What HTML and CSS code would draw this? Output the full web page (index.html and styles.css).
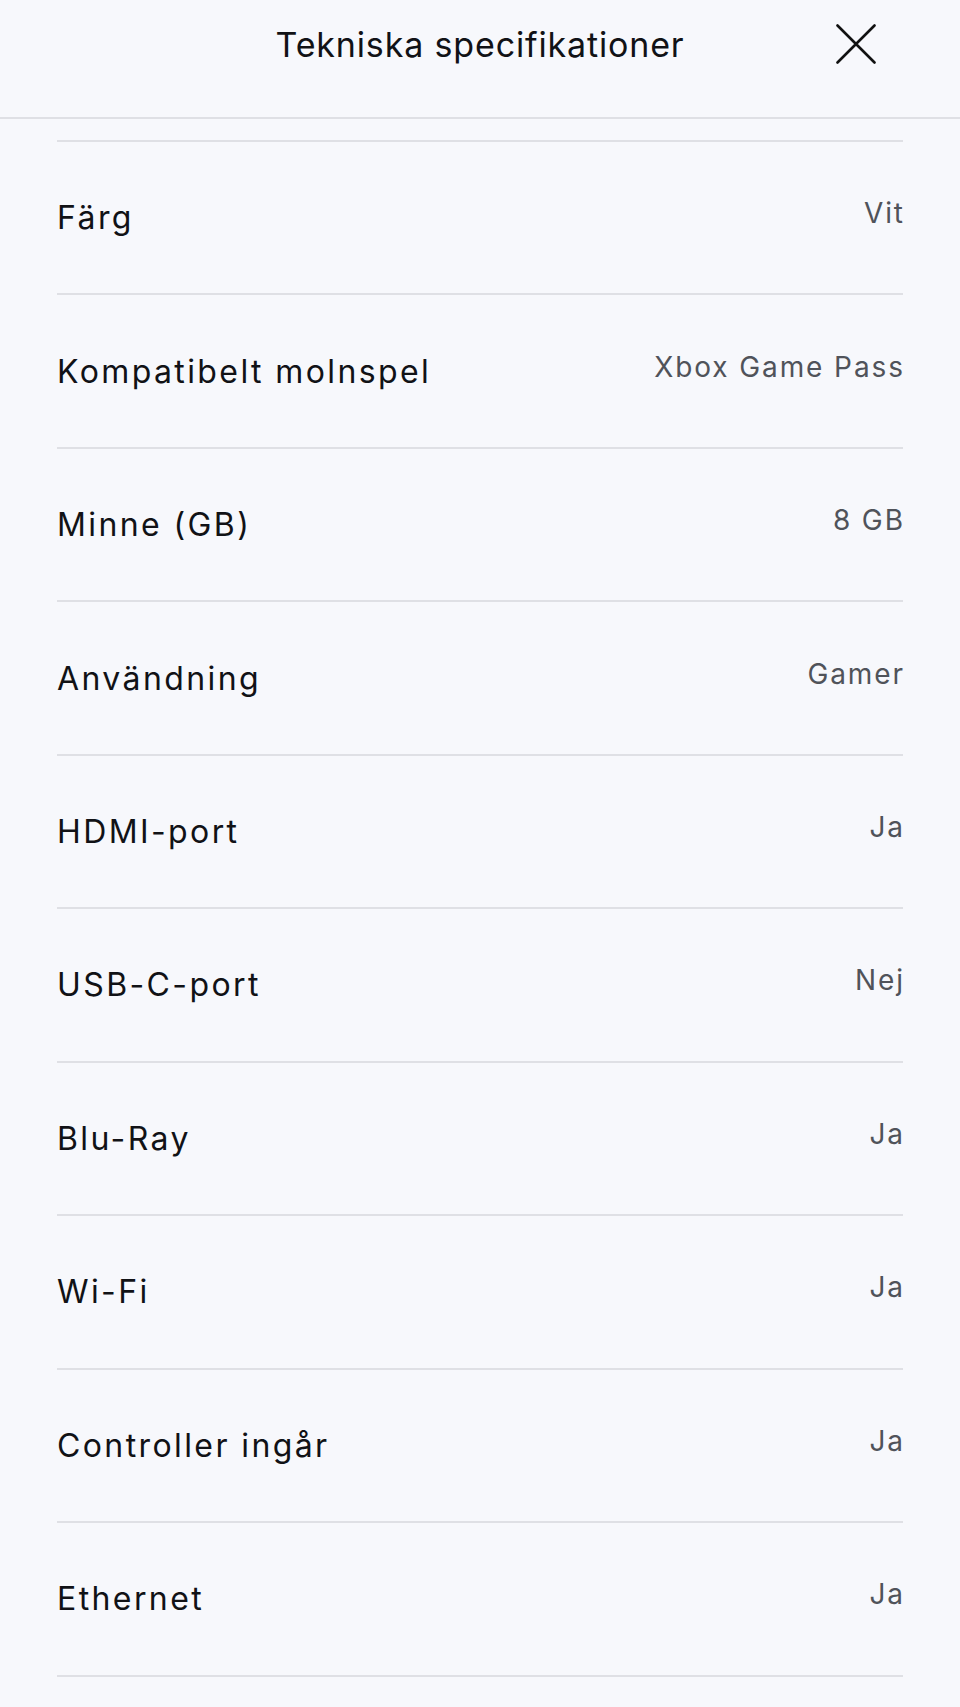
FILE: index.html
```html
<!DOCTYPE html>
<html lang="sv">
<head>
  <meta charset="UTF-8">
  <meta name="viewport" content="width=device-width, initial-scale=1.0">
  <title>Tekniska specifikationer</title>
  <link rel="stylesheet" href="styles.css">
</head>
<body>
  <div class="sheet">
    <div class="sheet-header">
      <span></span>
      <h1 class="sheet-title">Tekniska specifikationer</h1>
      <button class="close-btn" aria-label="Stäng">
        <svg width="40" height="40" viewBox="0 0 40 40">
          <path d="M1.5 1.5 L38.5 38.5 M38.5 1.5 L1.5 38.5" stroke="#111" stroke-width="2.6" stroke-linecap="round" fill="none"/>
        </svg>
      </button>
    </div>

    <div class="spec-list">
      <div class="spec-row"><span class="spec-label">Färg</span><span class="spec-value">Vit</span></div>
      <div class="spec-row"><span class="spec-label">Kompatibelt molnspel</span><span class="spec-value">Xbox Game Pass</span></div>
      <div class="spec-row"><span class="spec-label">Minne (GB)</span><span class="spec-value">8 GB</span></div>
      <div class="spec-row"><span class="spec-label">Användning</span><span class="spec-value">Gamer</span></div>
      <div class="spec-row"><span class="spec-label">HDMI-port</span><span class="spec-value">Ja</span></div>
      <div class="spec-row"><span class="spec-label">USB-C-port</span><span class="spec-value">Nej</span></div>
      <div class="spec-row"><span class="spec-label">Blu-Ray</span><span class="spec-value">Ja</span></div>
      <div class="spec-row"><span class="spec-label">Wi-Fi</span><span class="spec-value">Ja</span></div>
      <div class="spec-row"><span class="spec-label">Controller ingår</span><span class="spec-value">Ja</span></div>
      <div class="spec-row"><span class="spec-label">Ethernet</span><span class="spec-value">Ja</span></div>
      <div class="spec-row"></div>
    </div>
  </div>
</body>
</html>
```

FILE: styles.css
```css
* {
  margin: 0;
  padding: 0;
  box-sizing: border-box;
}

body {
  background-color: #f7f8fc;
  font-family: Inter, "Open Sans", sans-serif;
  color: #111216;
  overflow: hidden;
}

.sheet {
  width: 100%;
}

.sheet-header {
  height: 119px;
  display: grid;
  grid-template-columns: 1fr auto 1fr;
  align-items: center;
  border-bottom: 2px solid #dfe0e5;
  padding-bottom: 29px;
}

.sheet-title {
  font-size: 34px;
  font-weight: 400;
  letter-spacing: 0.85px;
}

.close-btn {
  justify-self: end;
  margin-right: 84px;
  width: 40px;
  height: 40px;
  border: none;
  background: transparent;
  display: flex;
}

.spec-list {
  padding: 0 57px;
  margin-top: 21px;
}

.spec-row {
  height: 153.46px;
  border-top: 2px solid #dfe0e5;
  display: flex;
  justify-content: space-between;
  align-items: center;
}

.spec-label {
  font-size: 32px;
  letter-spacing: 2.4px;
}

.spec-value {
  font-size: 28px;
  color: #50535a;
  margin-bottom: 9px;
  margin-right: -1.9px;
  letter-spacing: 1.9px;
}
```
